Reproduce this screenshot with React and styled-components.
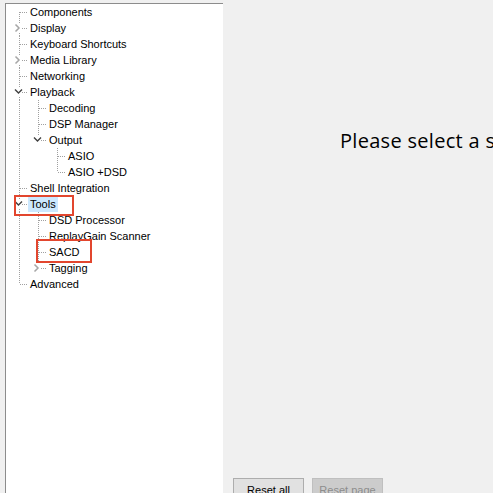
import React from "react";
import styled, { createGlobalStyle } from "styled-components";

const GlobalStyle = createGlobalStyle`
  html, body {
    margin: 0;
    padding: 0;
    background: #f0f0f0;
    overflow: hidden;
  }
  body {
    font-family: "Liberation Sans", Arial, sans-serif;
  }
`;

const tree = [
  { label: "Components" },
  { label: "Display", collapsed: true },
  { label: "Keyboard Shortcuts" },
  { label: "Media Library", collapsed: true },
  { label: "Networking" },
  {
    label: "Playback",
    children: [
      { label: "Decoding" },
      { label: "DSP Manager" },
      { label: "Output", children: [{ label: "ASIO" }, { label: "ASIO +DSD" }] },
    ],
  },
  { label: "Shell Integration" },
  {
    label: "Tools",
    selected: true,
    children: [
      { label: "DSD Processor" },
      { label: "ReplayGain Scanner" },
      { label: "SACD" },
      { label: "Tagging", collapsed: true },
    ],
  },
  { label: "Advanced" },
];

// flatten the tree into rows, remembering which ancestor lines keep going
function flatten(nodes, guides = [], rows = [], root = true) {
  nodes.forEach((node, i) => {
    const last = i === nodes.length - 1;
    rows.push({
      ...node,
      guides,
      last,
      first: root && i === 0,
      expanded: !!node.children,
    });
    if (node.children) flatten(node.children, [...guides, !last], rows, false);
  });
  return rows;
}

const Page = styled.div`
  position: relative;
  display: flex;
  width: 493px;
  height: 493px;
`;

const TreePanel = styled.div`
  margin: 3px 0 0 5px;
  width: 218px;
  height: 520px;
  box-sizing: border-box;
  background: #fff;
  border-top: 1px solid #8c8c8c;
  border-left: 1px solid #8c8c8c;
  padding-left: 3px;
  display: flex;
  flex-direction: column;
`;

const Row = styled.div`
  display: flex;
  align-items: center;
  height: 16px;
`;

const Cell = styled.svg`
  flex: none;
  width: 19px;
  height: 16px;
  display: block;
`;

const Label = styled.span`
  padding: 0 2px;
  height: 16px;
  line-height: 16px;
  font-size: 11px;
  color: #000;
  white-space: nowrap;
  background: ${({ $selected }) => ($selected ? "#cce8ff" : "transparent")};
`;

const dots = { stroke: "#a0a0a0", strokeWidth: 1, strokeDasharray: "1 1" };

function Guide({ on }) {
  return <Cell>{on && <line x1="10.5" y1="0" x2="10.5" y2="16" {...dots} />}</Cell>;
}

function Connector({ row }) {
  const hasBox = row.expanded || row.collapsed;
  const top = row.first ? 8 : 0;
  const bottom = row.last ? 8 : 16;
  return (
    <Cell>
      {hasBox ? (
        <>
          {!row.first && <line x1="10.5" y1="0" x2="10.5" y2="3" {...dots} />}
          {!row.last && <line x1="10.5" y1="13" x2="10.5" y2="16" {...dots} />}
          <line x1="13" y1="8.5" x2="19" y2="8.5" {...dots} />
        </>
      ) : (
        <>
          <line x1="10.5" y1={top} x2="10.5" y2={bottom} {...dots} />
          <line x1="11" y1="8.5" x2="19" y2="8.5" {...dots} />
        </>
      )}
      {row.collapsed && (
        <polyline
          points="6.5,4.5 10,8 6.5,11.5"
          fill="none"
          stroke="#a6a6a6"
          strokeWidth="1.5"
        />
      )}
      {row.expanded && (
        <polyline
          points="6,5.5 9.5,9 13,5.5"
          fill="none"
          stroke="#404040"
          strokeWidth="1.4"
        />
      )}
    </Cell>
  );
}

const ContentPane = styled.div`
  flex: 1;
  height: 512px;
  display: flex;
  flex-direction: column;
  overflow: hidden;
`;

const Message = styled.div`
  flex: 1;
  padding: 129px 0 0 117px;
  font-family: "Open Sans", "Noto Sans", sans-serif;
  font-size: 20px;
  letter-spacing: 0.3px;
  line-height: 24px;
  color: #000;
  white-space: nowrap;
`;

const ButtonBar = styled.div`
  display: flex;
  gap: 8px;
  padding: 0 0 11px 10px;
`;

const Button = styled.button`
  width: 71px;
  height: 23px;
  box-sizing: border-box;
  padding: 0;
  font-family: "Liberation Sans", Arial, sans-serif;
  font-size: 11px;
  background: ${({ disabled }) => (disabled ? "#cccccc" : "#e1e1e1")};
  border: 1px solid ${({ disabled }) => (disabled ? "#bfbfbf" : "#adadad")};
  color: ${({ disabled }) => (disabled ? "#8d8d8d" : "#000")};
`;

const Mark = styled.div`
  position: absolute;
  box-sizing: border-box;
  border: 2px solid #e2462e;
  left: ${({ $x }) => $x}px;
  top: ${({ $y }) => $y}px;
  width: ${({ $w }) => $w}px;
  height: ${({ $h }) => $h}px;
`;

export default function App() {
  const rows = flatten(tree);
  return (
    <>
      <GlobalStyle />
      <Page>
        <TreePanel>
          {rows.map((row) => (
            <Row key={row.label}>
              {row.guides.map((g, i) => (
                <Guide key={i} on={g} />
              ))}
              <Connector row={row} />
              <Label $selected={row.selected}>{row.label}</Label>
            </Row>
          ))}
        </TreePanel>
        <ContentPane>
          <Message>Please select a subpage.</Message>
          <ButtonBar>
            <Button>Reset all</Button>
            <Button disabled>Reset page</Button>
          </ButtonBar>
        </ContentPane>
        <Mark $x={14} $y={195} $w={60} $h={21} />
        <Mark $x={36} $y={239} $w={56} $h={24} />
      </Page>
    </>
  );
}
